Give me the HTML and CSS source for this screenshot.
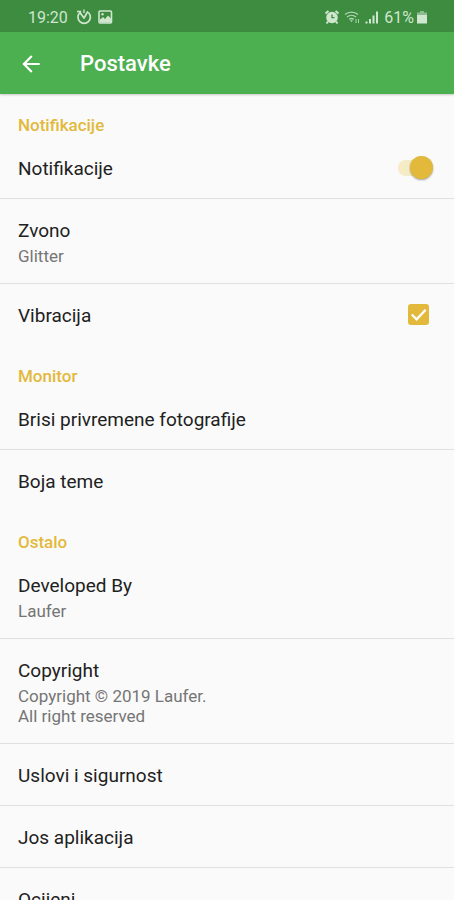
FILE: index.html
```html
<!DOCTYPE html>
<html lang="bs">
<head>
  <meta charset="utf-8">
  <meta name="viewport" content="width=device-width, initial-scale=1">
  <title>Postavke</title>
  <link rel="stylesheet" href="styles.css">
</head>
<body>
  <div class="status-bar">
    <div class="status-group">
      <span>19:20</span>
      <svg class="status-icon" viewBox="0 0 16 16" aria-hidden="true">
        <path d="M3.500 4A6.200 6.200 0 1 0 12.800 4" fill="none" stroke="currentColor" stroke-width="1.700" stroke-linecap="round"/>
        <path d="M5 5l3 4 3.500-6" fill="none" stroke="currentColor" stroke-width="1.700" stroke-linecap="round" stroke-linejoin="round"/>
        <path d="M8 .5v3.500M1 2.500h3.500v3" fill="none" stroke="currentColor" stroke-width="1.400"/>
      </svg>
      <svg class="status-icon" viewBox="0 0 16 16" aria-hidden="true">
        <rect x="2" y="2" width="12.500" height="12" rx="1" fill="none" stroke="currentColor" stroke-width="1.600"/>
        <path d="M3 13.500V10.500l3-2.500 2 2 3-3.500 3 3v4z" fill="currentColor"/>
        <circle cx="5.500" cy="5.300" r="1.200" fill="currentColor"/>
      </svg>
    </div>
    <div class="status-group status-right">
      <svg class="status-icon" viewBox="0 0 16 16" aria-hidden="true">
        <path d="M1.500 4.500l3-2.500M14.500 4.500l-3-2.500M4 12.500l-1.500 2M12 12.500l1.500 2" stroke="currentColor" stroke-width="2"/>
        <circle cx="8" cy="8.500" r="5.800" fill="currentColor"/>
        <path d="M8 5.500v3.200h2.500" class="alarm-hands" fill="none" stroke-width="1.300"/>
      </svg>
      <svg class="status-icon status-wifi" viewBox="0 0 16 16" aria-hidden="true">
        <path d="M1 5.500a10 10 0 0 1 13 0M3 8a7 7 0 0 1 9 0M5.200 10.300a4 4 0 0 1 4.600 0" fill="none" stroke="currentColor" stroke-width="1.400"/>
        <path d="M6 11.300h3l-1.500 2z" fill="currentColor"/>
        <path d="M12 10v4M14.500 10v4" stroke="currentColor" stroke-width="1"/>
      </svg>
      <svg class="status-icon" viewBox="0 0 16 16" aria-hidden="true">
        <path d="M2.500 12.500v2M6 10v4.500M9.500 6.500v8M13 2.500v12" stroke="currentColor" stroke-width="2"/>
      </svg>
      <span class="battery-text">61%</span>
      <svg class="battery-icon" viewBox="0 0 10 16" aria-hidden="true">
        <path d="M3 2h4v1.500h3V6H0V3.500h3z" fill="currentColor" opacity=".55"/>
        <path d="M0 6h10v8.500H0z" fill="currentColor"/>
      </svg>
    </div>
  </div>

  <header class="app-bar">
    <button class="back" type="button" aria-label="Nazad">
      <svg viewBox="0 0 24 24" aria-hidden="true"><path d="M20 11H7.830l5.590-5.590L12 4l-8 8 8 8 1.410-1.410L7.830 13H20z" fill="currentColor"/></svg>
    </button>
    <h1>Postavke</h1>
  </header>

  <main>
    <section>
      <h2>Notifikacije</h2>
      <label class="row">
        <span class="title">Notifikacije</span>
        <input class="switch" type="checkbox" role="switch" checked>
      </label>
      <a class="row" href="#zvono">
        <span><span class="title">Zvono</span><span class="summary">Glitter</span></span>
      </a>
      <label class="row">
        <span class="title">Vibracija</span>
        <span class="check">
          <input type="checkbox" checked>
          <svg viewBox="0 0 22 22" aria-hidden="true"><path d="M4 11l5 5L18.500 6" fill="none" stroke="currentColor" stroke-width="2.400"/></svg>
        </span>
      </label>
    </section>
    <section>
      <h2>Monitor</h2>
      <a class="row" href="#brisi"><span class="title">Brisi privremene fotografije</span></a>
      <a class="row" href="#boja"><span class="title">Boja teme</span></a>
    </section>
    <section>
      <h2>Ostalo</h2>
      <a class="row" href="#developer">
        <span><span class="title">Developed By</span><span class="summary">Laufer</span></span>
      </a>
      <a class="row" href="#copyright">
        <span><span class="title">Copyright</span><span class="summary">Copyright © 2019 Laufer.<br>All right reserved</span></span>
      </a>
      <a class="row" href="#uslovi"><span class="title">Uslovi i sigurnost</span></a>
      <a class="row" href="#aplikacije"><span class="title">Jos aplikacija</span></a>
      <a class="row" href="#ocijeni"><span class="title">Ocijeni</span></a>
    </section>
  </main>
</body>
</html>
```
FILE: styles.css
```css
:root {
  --green: #4caf50;
  --green-dark: #3d8c40;
  --accent: #e2b93b;
  --status: #cfe6cf;
}

* {
  box-sizing: border-box;
}

body {
  margin: 0;
  height: 100vh;
  display: flex;
  flex-direction: column;
  background: #fafafa;
  color: #212121;
  font-family: Roboto, sans-serif;
}

.status-bar {
  flex: none;
  display: flex;
  justify-content: space-between;
  height: 32px;
  padding: 2px 27px 0 28px;
  background: var(--green-dark);
  color: var(--status);
  font-size: 16px;
}

.status-group {
  display: flex;
  align-items: center;
  gap: 5px;
}

.status-group > span:first-child {
  margin-right: 3px;
}

.status-icon {
  width: 16px;
  height: 16px;
}

.status-right {
  gap: 4px;
}

.status-wifi {
  opacity: 0.8;
}

.alarm-hands {
  stroke: var(--green-dark);
}

.battery-icon {
  width: 10px;
  height: 16px;
}

.battery-text {
  margin-right: -1px;
}

.app-bar {
  flex: none;
  display: flex;
  align-items: center;
  gap: 36px;
  height: 62px;
  padding: 1px 18px 0;
  background: var(--green);
  color: #fff;
  box-shadow: 0 1px 2px rgba(0, 0, 0, 0.2);
  z-index: 1;
}

.back {
  width: 26px;
  height: 26px;
  padding: 0;
  border: 0;
  background: none;
  color: inherit;
}

.back svg {
  display: block;
  width: 100%;
  height: 100%;
}

h1 {
  margin: 0;
  font-size: 22px;
  font-weight: 500;
}

main {
  flex: 1;
  min-height: 0;
  padding-top: 1px;
  overflow-y: auto;
  scrollbar-width: none;
}

h2 {
  margin: 0;
  padding: 20px 18px 2px;
  color: var(--accent);
  font-size: 17px;
  font-weight: 500;
  line-height: 20px;
}

.row {
  display: flex;
  align-items: center;
  justify-content: space-between;
  padding: 20px 18px 17px;
  border-bottom: 1px solid #e0e0e0;
  color: inherit;
  text-decoration: none;
}

.row:last-child {
  border-bottom-color: transparent;
}

.title {
  display: block;
  font-size: 19px;
  line-height: 24px;
}

.summary {
  display: block;
  margin-top: 3px;
  color: #757575;
  font-size: 17px;
  line-height: 20px;
}

.switch {
  appearance: none;
  display: flex;
  align-items: center;
  justify-content: flex-end;
  width: 35px;
  height: 16px;
  margin: 0 3px 3px 0;
  border-radius: 8px;
  background: #f5ebc4;
}

.switch::before {
  content: "";
  width: 23px;
  height: 23px;
  flex: none;
  border-radius: 50%;
  background: var(--accent);
  box-shadow: 0 1px 2px rgba(0, 0, 0, 0.35);
}

.switch:not(:checked) {
  justify-content: flex-start;
}

.check {
  display: grid;
  margin: 0 7px 3px 0;
}

.check input,
.check svg {
  grid-area: 1 / 1;
  width: 21px;
  height: 21px;
  margin: 0;
}

.check input {
  appearance: none;
  border: 2px solid var(--accent);
  border-radius: 3px;
}

.check input:checked {
  background: var(--accent);
}

.check svg {
  color: #fff;
  pointer-events: none;
}
```
